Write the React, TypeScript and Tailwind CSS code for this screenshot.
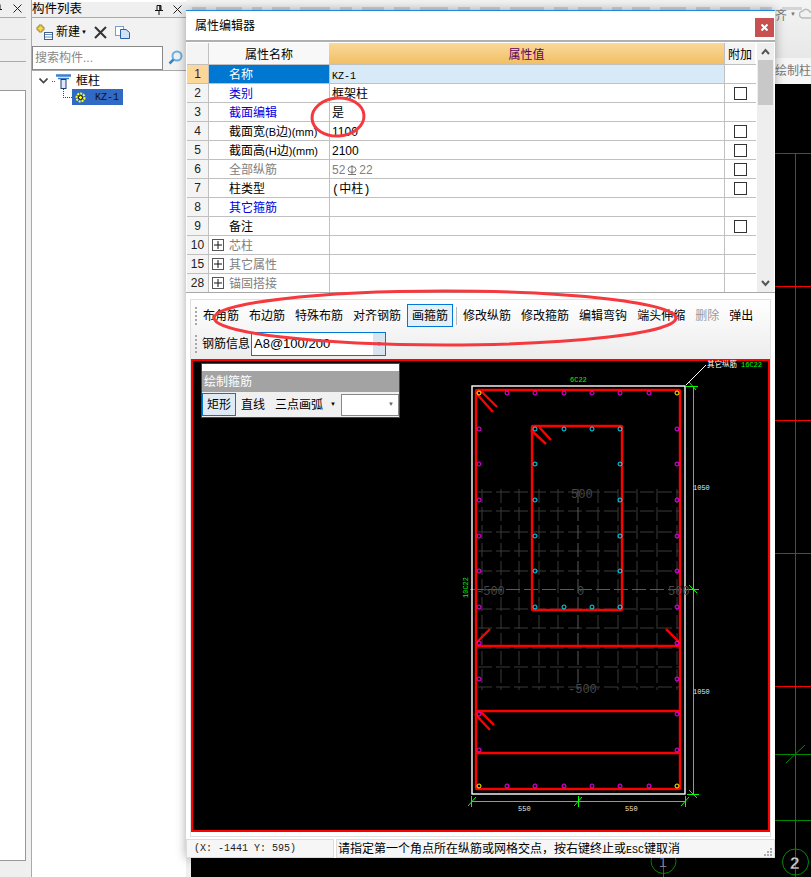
import type { ReactNode } from 'react';

const sans = '"Liberation Sans", "Noto Sans CJK SC", sans-serif';
const mono = { fontFamily: '"Liberation Mono", "Noto Sans CJK SC", monospace' };

type Row = {
  no: string;
  name: ReactNode;
  value?: ReactNode;
  tone?: 'blue' | 'gray';
  check?: boolean;
  plus?: boolean;
};

function Rebar() {
  return (
    <svg className="mx-[2px] inline-block align-[-1px]" width="10" height="10" viewBox="0 0 10 10" fill="none" stroke="#777">
      <ellipse cx="5" cy="4.5" rx="4" ry="3" />
      <path d="M5 0 V9 M1 9.5 H9" />
    </svg>
  );
}

const rows: Row[] = [
  { no: '1', name: '名称', value: <span className="text-[10px]" style={mono}>KZ-1</span> },
  { no: '2', name: '类别', value: '框架柱', tone: 'blue', check: true },
  { no: '3', name: '截面编辑', value: '是', tone: 'blue' },
  { no: '4', name: <>截面宽<span className="text-[11px]">(B</span>边<span className="text-[11px]">)(mm)</span></>, value: '1100', check: true },
  { no: '5', name: <>截面高<span className="text-[11px]">(H</span>边<span className="text-[11px]">)(mm)</span></>, value: '2100', check: true },
  { no: '6', name: '全部纵筋', value: <>52<Rebar />22</>, tone: 'gray', check: true },
  { no: '7', name: '柱类型', value: <><span style={mono}>(</span>中柱<span style={mono}>)</span></>, check: true },
  { no: '8', name: '其它箍筋', tone: 'blue' },
  { no: '9', name: '备注', check: true },
  { no: '10', name: '芯柱', tone: 'gray', plus: true },
  { no: '15', name: '其它属性', tone: 'gray', plus: true },
  { no: '28', name: '锚固搭接', tone: 'gray', plus: true },
];

const tools = ['布角筋', '布边筋', '特殊布筋', '对齐钢筋', '画箍筋', '|', '修改纵筋', '修改箍筋', '编辑弯钩', '端头伸缩', '删除', '弹出'];

const fadedBits = [14, 26, 10, 18, 30, 12, 22, 16, 28, 12, 20, 34, 14, 24, 10, 18, 26, 14, 30, 12, 20, 16];

function Grip() {
  return <div className="h-[18px] w-[2px] shrink-0 border-l-2 border-dotted border-[#a8a8a8]" />;
}

function Close() {
  return (
    <svg width="9" height="9" viewBox="0 0 9 9" fill="none" stroke="#222">
      <path d="M0.5 0.5 L8.5 8.5 M8.5 0.5 L0.5 8.5" />
    </svg>
  );
}

function Pin() {
  return (
    <svg width="8" height="10" viewBox="0 0 8 10" fill="none" stroke="#111">
      <path d="M2 0.5 H6 V5.5 H2 Z M0 5.5 H8 M4 6 V10" />
      <path d="M5 1 V5" strokeWidth="1.5" />
    </svg>
  );
}

function Chevron({ up }: { up?: boolean }) {
  return (
    <svg width="9" height="7" viewBox="0 0 9 7" fill="none" stroke="#555" strokeWidth="2">
      <path d={up ? 'M1 6 L4.5 2 L8 6' : 'M1 1 L4.5 5 L8 1'} />
    </svg>
  );
}

function PropRow({ row, index }: { row: Row; index: number }) {
  const selected = index === 0;
  const nameColor = row.tone === 'blue' ? 'text-[#0000e0]' : row.tone === 'gray' ? 'text-[#808080]' : 'text-black';
  return (
    <div className="flex h-[19px] overflow-hidden border-b border-[#c0c0c0] text-[12px] leading-[21px]">
      <div className={`w-[21px] shrink-0 text-center leading-[19px] ${selected ? 'bg-[#fbd79a] text-[#500060]' : 'bg-[#f4f4f4] text-[#222]'}`}>{row.no}</div>
      <div className={`flex w-[121px] shrink-0 border-l border-[#c0c0c0] ${selected ? 'bg-[#0078d2] text-white' : nameColor}`}>
        {row.plus ? (
          <div className="ml-[3px] mr-[5px] mt-[3px] flex h-[12px] w-[12px] shrink-0 items-center justify-center border border-[#555]">
            <svg width="8" height="8" viewBox="0 0 8 8" stroke="#111"><path d="M0 4 H8 M4 0 V8" /></svg>
          </div>
        ) : (
          <div className="w-[20px] shrink-0" />
        )}
        <span className="whitespace-nowrap">{row.name}</span>
      </div>
      <div className={`w-[395px] shrink-0 border-l border-[#c0c0c0] pl-[2px] ${selected ? 'bg-[#d8e9f7]' : ''} ${row.tone === 'gray' ? 'text-[#808080]' : 'text-black'}`}>
        {row.value}
      </div>
      <div className="flex w-[31px] shrink-0 items-center justify-center border-l border-[#c0c0c0]">
        {row.check && <div className="h-[13px] w-[13px] border border-[#333]" />}
      </div>
    </div>
  );
}

function Dot({ x, y, c }: { x: number; y: number; c: string }) {
  return <circle cx={x} cy={y} r={2} fill="none" stroke={c} strokeWidth={1} />;
}

function DimText({ x, y, size = 7, fill, children }: { x: number; y: number; size?: number; fill: string; children: ReactNode }) {
  return (
    <text x={x} y={y} fontSize={size} fill={fill} fontFamily="Liberation Mono, monospace">
      {children}
    </text>
  );
}

// column section drawing, coordinates are page pixels through the viewBox
function Drawing() {
  const gridV = [482, 501, 519, 539, 558, 598, 618, 637, 657, 677];
  const gridH = [492, 511, 532, 551, 571, 609, 628, 648, 667, 687];
  const topX = [507, 535, 564, 592, 620, 649];
  const sideY = [429, 464, 500, 536, 571, 607, 643, 679, 714, 750];
  const innerX = [535, 564, 592, 620];
  const innerY = [464, 500, 536, 571];
  return (
    <svg className="absolute inset-0" width="579" height="473" viewBox="191 359 579 473" fill="none">
      <g stroke="#3a3a3a" strokeWidth="1" strokeDasharray="14 4">
        {gridV.map((x) => <line key={x} x1={x} y1={489} x2={x} y2={690} />)}
        {gridH.map((y) => <line key={y} x1={478} y1={y} x2={680} y2={y} />)}
      </g>
      <g stroke="#5a5a5a" strokeWidth="1" strokeDasharray="14 4">
        <line x1="578" y1="489" x2="578" y2="690" />
        <line x1="470" y1="589.5" x2="690" y2="589.5" />
      </g>
      <rect x="472" y="386" width="213" height="408" stroke="#fff" strokeWidth="1.4" />
      <g stroke="#ff0000" strokeWidth="2.4">
        <rect x="476" y="390" width="204" height="399" rx="1" />
        <rect x="532" y="426" width="90" height="184" rx="1" />
        <line x1="476" y1="646" x2="680" y2="646" />
        <line x1="476" y1="711" x2="680" y2="711" />
        <line x1="476" y1="753" x2="680" y2="753" />
        <path d="M481 391 L497 407 M476 393 L493 412 M539 427 L551 440 M531 430 L546 444 M490 629 L476 643 M666 629 L680 643 M481 712 L494 725 M475 714 L490 730" />
      </g>
      <g>
        {topX.map((x) => <Dot key={x} x={x} y={393} c="#ff00ff" />)}
        {topX.map((x) => <Dot key={`b${x}`} x={x} y={786} c="#ff00ff" />)}
        {sideY.map((y) => <Dot key={`l${y}`} x={479} y={y} c="#ff00ff" />)}
        {sideY.map((y) => <Dot key={`r${y}`} x={677} y={y} c="#ff00ff" />)}
        <Dot x={479} y={393} c="#ffff00" />
        <Dot x={677} y={393} c="#ffff00" />
        <Dot x={479} y={786} c="#ffff00" />
        <Dot x={677} y={786} c="#ffff00" />
        {innerX.map((x) => <Dot key={`i${x}`} x={x} y={429} c="#00e5ff" />)}
        {innerX.map((x) => <Dot key={`j${x}`} x={x} y={607} c="#00e5ff" />)}
        {innerY.map((y) => <Dot key={`k${y}`} x={535} y={y} c="#00e5ff" />)}
        {innerY.map((y) => <Dot key={`m${y}`} x={620} y={y} c="#00e5ff" />)}
      </g>
      <g stroke="#00ff00" strokeWidth="1">
        <path d="M693.5 386 V794 M686 386.5 H698 M687 589.5 H699 M687 794.5 H699 M472 801.5 H686 M471.5 796 V807 M578.5 796 V807 M685.5 796 V807" />
        <path d="M689 382 L696 390 M689 585 L697 593 M689 790 L697 798 M468 806 L476 797 M574 806 L582 797 M681 806 L689 797" />
      </g>
      <path d="M686 385 L706 365" stroke="#fff" />
      <DimText x={570} y={382} fill="#00ff00">6C22</DimText>
      <text x={707} y={367} fontSize={7.5} fill="#fff" fontFamily={sans}>其它纵筋</text>
      <DimText x={741} y={367} fill="#00ff00">16C22</DimText>
      <DimText x={693} y={490} fill="#d8ecff">1050</DimText>
      <DimText x={693} y={694} fill="#d8ecff">1050</DimText>
      <DimText x={518} y={811} fill="#f0e8d0">550</DimText>
      <DimText x={625} y={811} fill="#f0e8d0">550</DimText>
      <g transform="rotate(-90 468 598)">
        <DimText x={468} y={598} fill="#00ff00">10C22</DimText>
      </g>
      <DimText x={571} y={498} size={12} fill="#484848">500</DimText>
      <DimText x={476} y={595} size={12} fill="#484848">-500</DimText>
      <DimText x={577} y={595} size={12} fill="#484848">0</DimText>
      <DimText x={668} y={595} size={12} fill="#484848">500</DimText>
      <DimText x={568} y={693} size={12} fill="#484848">-500</DimText>
    </svg>
  );
}

function FloatingTools() {
  return (
    <div className="absolute left-[10px] top-[4px] w-[199px] border border-[#444] bg-white text-[12px]">
      <div className="mt-[7px] flex h-[21px] items-center bg-[#a3a3a3] pl-[2px] text-white">绘制箍筋</div>
      <div className="flex h-[25px] items-center bg-[#f0f0f0]">
        <div className="flex h-[23px] w-[34px] items-center justify-center border border-[#0078d7] bg-[#dfeaf5]">矩形</div>
        <span className="ml-[5px]">直线</span>
        <span className="ml-[10px]">三点画弧</span>
        <span className="ml-[7px] text-[6px]">▼</span>
        <div className="ml-[5px] flex h-[22px] w-[58px] items-center justify-end border border-[#888] bg-white pr-[4px] text-[6px] text-[#666]">▼</div>
      </div>
    </div>
  );
}

function Dialog() {
  return (
    <div className="absolute left-0 top-[10px] flex h-[848px] w-[589px] flex-col border-t border-[#1e88e0] bg-white shadow-[0_0_10px_rgba(0,0,0,0.35)]">
      <div className="flex h-[31px] shrink-0 items-start justify-between border-b-2 border-[#b0b0b0] pl-[9px] pt-[8px] text-[12px] leading-[14px]">
        <span>属性编辑器</span>
        <div className="mr-[1px] -mt-[1px] flex h-[19px] w-[19px] items-center justify-center bg-[#c75050]">
          <svg width="7" height="7" viewBox="0 0 7 7" fill="none" stroke="#fff" strokeWidth="2"><path d="M0.5 0.5 L6.5 6.5 M6.5 0.5 L0.5 6.5" /></svg>
        </div>
      </div>
      <div className="flex h-[251px] shrink-0 border-b border-[#a8a8a8] pl-[1px] pt-[1px]">
        <div className="w-[569px] overflow-hidden">
          <div className="flex h-[22px] overflow-hidden border-b border-[#c0c0c0] text-[12px] leading-[25px]">
            <div className="w-[21px] bg-[#f4f4f4]" />
            <div className="w-[121px] border-l border-[#c0c0c0] bg-[#f8f8f8] text-center">属性名称</div>
            <div className="w-[395px] bg-gradient-to-b from-[#f9d899] to-[#f2bf63] text-center text-[#5b0060]">属性值</div>
            <div className="w-[31px] border-l border-[#c0c0c0] bg-[#f4f4f4] text-center">附加</div>
          </div>
          {rows.map((r, i) => <PropRow key={r.no} row={r} index={i} />)}
        </div>
        <div className="ml-[1px] flex w-[17px] flex-col items-center bg-[#eee]">
          <div className="flex h-[17px] items-center"><Chevron up /></div>
          <div className="h-[45px] w-[15px] bg-[#c8c8c8]" />
          <div className="mt-auto flex h-[17px] items-center"><Chevron /></div>
        </div>
      </div>
      <div className="mx-[4px] mt-[6px] flex h-[538px] shrink-0 flex-col border border-[#e0e0e0] bg-gradient-to-b from-white to-[#ececec] bg-[length:100%_60px] bg-no-repeat">
        <div className="flex h-[31px] shrink-0 items-center pl-[4px] text-[12px]">
          <Grip />
          <div className="w-[2px]" />
          {tools.map((t) =>
            t === '|' ? (
              <div key={t} className="ml-px mr-[2px] h-[18px] w-px bg-[#bbb]" />
            ) : (
              <div
                key={t}
                className={`mr-[2px] flex h-[23px] items-center whitespace-nowrap px-[4px] ${t === '画箍筋' ? 'border border-[#0078d7] bg-[#e5eff8] px-[3px]' : ''} ${t === '删除' ? 'text-[#999]' : ''}`}
              >
                {t}
              </div>
            ),
          )}
        </div>
        <div className="flex h-[28px] shrink-0 items-center pb-[3px] pl-[4px] pt-[1px] text-[12px]">
          <Grip />
          <span className="ml-[5px] mr-px">钢筋信息</span>
          <div className="flex h-full w-[135px] items-center justify-between border border-[#0078d7] bg-white pl-[2px]">
            <span className="text-[13px]">A8@100/200</span>
            <span className="flex h-full w-[12px] items-center justify-center bg-[#d8e4f0] text-[6px]">▼</span>
          </div>
        </div>
        <div className="relative h-[473px] w-[579px] shrink-0 bg-black shadow-[inset_0_0_0_2px_#ff0000]">
          <Drawing />
          <FloatingTools />
        </div>
      </div>
      <div className="mt-[2px] flex h-[19px] shrink-0 items-center gap-[2px] text-[12px]">
        <div className="flex h-full w-[148px] items-center border border-[#ddd] bg-[#f6f6f6] pl-[7px] text-[10px] text-[#222]" style={mono}>(X: -1441 Y: 595)</div>
        <div className="flex h-full flex-1 items-center justify-between border border-[#ddd] bg-[#f6f6f6] pl-px">
          <span>请指定第一个角点所在纵筋或网格交点，按右键终止或<span className="text-[10px]" style={mono}>ESC</span>键取消</span>
          <svg className="mr-[1px] mt-[6px]" width="10" height="10" viewBox="0 0 10 10" fill="#aaa">
            <rect x="7" y="1" width="2" height="2" /><rect x="4" y="4" width="2" height="2" /><rect x="7" y="4" width="2" height="2" />
            <rect x="1" y="7" width="2" height="2" /><rect x="4" y="7" width="2" height="2" /><rect x="7" y="7" width="2" height="2" />
          </svg>
        </div>
      </div>
    </div>
  );
}

function LeftDock() {
  return (
    <div className="flex h-full w-[26px] shrink-0 flex-col bg-[#efefef]">
      <div className="flex h-[18px] shrink-0 items-center justify-between overflow-hidden border-b border-[#aaa] pr-[4px]">
        <div className="-ml-[6px]"><Pin /></div>
        <Close />
      </div>
      <div className="h-[22px] shrink-0 border-b border-[#bbb]" />
      <div className="h-[22px] shrink-0 border-b border-[#aaa]" />
      <div className="h-[28px] shrink-0" />
      <div className="h-[771px] shrink-0 border-y border-r border-[#999] bg-white" />
    </div>
  );
}

function ComponentList() {
  return (
    <div className="flex h-full w-[155px] shrink-0 flex-col border-l border-[#aaa] bg-white">
      <div className="mt-[2px] flex h-[16px] shrink-0 items-center justify-between border-b border-[#aaa] bg-[#efefef] pr-[4px] text-[12.5px] leading-none">
        <span>构件列表</span>
        <div className="flex items-center gap-[10px]"><Pin /><Close /></div>
      </div>
      <div className="flex h-[28px] shrink-0 items-center bg-[#f2f2f2] pl-[4px] text-[12px]">
        <svg width="17" height="16" viewBox="0 0 17 16" fill="none">
          <path d="M3 1 H6 V3 H8 V6 H6 V8 H3 V6 H1 V3 H3 Z" fill="#f5d548" stroke="#a88a20" />
          <rect x="8.5" y="8.5" width="8" height="7" fill="#fff" stroke="#40608a" />
          <path d="M9 10.5 H16 M9 13 H16" stroke="#6a8fc0" />
        </svg>
        <span className="ml-[3px]">新建</span>
        <span className="ml-[1px] text-[6px]">▼</span>
        <svg className="ml-[7px]" width="13" height="13" viewBox="0 0 13 13" fill="none" stroke="#333" strokeWidth="2"><path d="M1 1 L12 12 M12 1 L1 12" /></svg>
        <svg className="ml-[8px]" width="16" height="13" viewBox="0 0 16 13" fill="none">
          <rect x="0.5" y="0.5" width="8" height="9" fill="#fff" stroke="#7a9cc8" />
          <path d="M5.5 3.5 H11 L14.5 6.5 V12.5 H5.5 Z" fill="#cfe2f7" stroke="#2a60a8" />
        </svg>
      </div>
      <div className="flex h-[24px] shrink-0 bg-[#f2f2f2]">
        <div className="flex h-[24px] w-[131px] items-center border border-[#888] bg-white pl-[2px] text-[12px] text-[#888]">搜索构件...</div>
        <svg className="ml-[5px] mt-[4px]" width="15" height="15" viewBox="0 0 15 15" fill="none">
          <circle cx="9" cy="6" r="4.5" stroke="#6ab0e0" strokeWidth="2" />
          <path d="M5.5 9.5 L1.5 13.5" stroke="#3a85c0" strokeWidth="2.5" />
        </svg>
      </div>
      <div className="flex h-[19px] shrink-0 items-center border-t border-[#aaa] pl-[7px] pt-[2px] text-[12px]">
        <svg width="9" height="6" viewBox="0 0 9 6" fill="none" stroke="#444" strokeWidth="1.6"><path d="M0.5 0.5 L4.5 4.5 L8.5 0.5" /></svg>
        <span className="ml-[4px] w-[3px] border-b border-dotted border-[#555]" />
        <svg className="ml-px" width="15" height="15" viewBox="0 0 15 15" fill="none">
          <path d="M0 1.5 H15" stroke="#3a7fd0" strokeWidth="2.5" />
          <path d="M2 4.5 H13" stroke="#3a7fd0" strokeWidth="1.5" />
          <rect x="5" y="5.5" width="5" height="9" fill="#dbe9f9" stroke="#223a70" />
        </svg>
        <span className="ml-[5px]">框柱</span>
      </div>
      <div className="flex items-start pl-[31px]">
        <div className="h-[9px] w-[9px] border-b border-l border-dotted border-[#444]" />
        <div className="flex h-[16px] w-[51px] items-center bg-[#316ac5] pl-[3px] text-[10px] text-[#111]">
          <svg width="11" height="11" viewBox="0 0 11 11" fill="none">
            <circle cx="5.5" cy="5.5" r="4" stroke="#ffff00" strokeWidth="2" strokeDasharray="2 1" />
            <circle cx="5.5" cy="5.5" r="2" fill="#ffff00" stroke="#111" />
          </svg>
          <span className="ml-[9px]" style={mono}>KZ-1</span>
        </div>
      </div>
    </div>
  );
}

function CadView() {
  return (
    <div className="relative flex h-full flex-1 flex-col">
      <div className="flex h-[58px] shrink-0 justify-end bg-gradient-to-b from-[#f4f4f4] to-[#e8e8e8] pt-[7px] text-[12px] text-[#777]">
        <div className="absolute left-[6px] top-[7px] flex gap-[10px]">
          {fadedBits.map((w, i) => <span key={i} className="h-[3px] bg-[#d4d4d4]" style={{ width: w }} />)}
        </div>
        <div className="flex w-[36px] items-start gap-[3px]">
          <span>齐</span>
          <span className="mt-[3px] text-[6px]">▼</span>
          <svg className="mt-[1px] shrink-0" width="14" height="11" viewBox="0 0 14 11" fill="none" stroke="#bbb" strokeWidth="1.5">
            <path d="M4 10 A3.5 3.5 0 0 1 4 3 A4 4 0 0 1 11 4 A3 3 0 0 1 14 10 Z" />
          </svg>
        </div>
      </div>
      <div className="flex h-[26px] shrink-0 justify-end bg-[#f6f6f6] text-[12px] leading-[26px] text-[#777]">
        <span className="w-[36px] whitespace-nowrap">绘制柱</span>
      </div>
      <div className="flex-1 pl-[5px]">
        <svg className="block bg-black" width="620" height="793" viewBox="191 84 620 793" fill="none">
          <g stroke="#ff0000">
            {[153.5, 286.5, 420.5, 553.5, 686.5].map((y) => <line key={y} x1={775} y1={y} x2={811} y2={y} />)}
            <line x1="795.5" y1="153" x2="795.5" y2="686" />
          </g>
          <g stroke="#008a00">
            <line x1="795.5" y1="686" x2="795.5" y2="877" />
            <line x1="775" y1="754.5" x2="811" y2="754.5" />
            <line x1="775" y1="820.5" x2="811" y2="820.5" />
            <line x1="786" y1="763" x2="805" y2="745" />
            <circle cx="795.5" cy="862" r="13" />
            <line x1="663.5" y1="858" x2="663.5" y2="877" />
            <circle cx="663.5" cy="861" r="12.5" />
          </g>
          <text x="790" y="869" fontSize="17" fontWeight="bold" fill="#ccc" fontFamily={sans} stroke="#000" strokeWidth="0.3">2</text>
          <text x="659" y="867" fontSize="14" fill="#8a7a9a" fontFamily={sans}>1</text>
        </svg>
      </div>
      <Dialog />
    </div>
  );
}

export default function App() {
  return (
    <div className="relative flex h-[877px] w-[811px] overflow-hidden bg-[#f0f0f0] text-[12px] text-black" style={{ fontFamily: sans }}>
      <LeftDock />
      <div className="w-[5px] shrink-0" />
      <ComponentList />
      <CadView />
      {/* hand drawn red marks on top of the screenshot */}
      <svg className="pointer-events-none absolute left-0 top-0" width="811" height="877" fill="none" stroke="#f53a3f" strokeWidth="3">
        <ellipse cx="338" cy="117" rx="26" ry="19" transform="rotate(-4 338 117)" />
        <ellipse cx="445" cy="318" rx="231" ry="27" />
      </svg>
    </div>
  );
}
